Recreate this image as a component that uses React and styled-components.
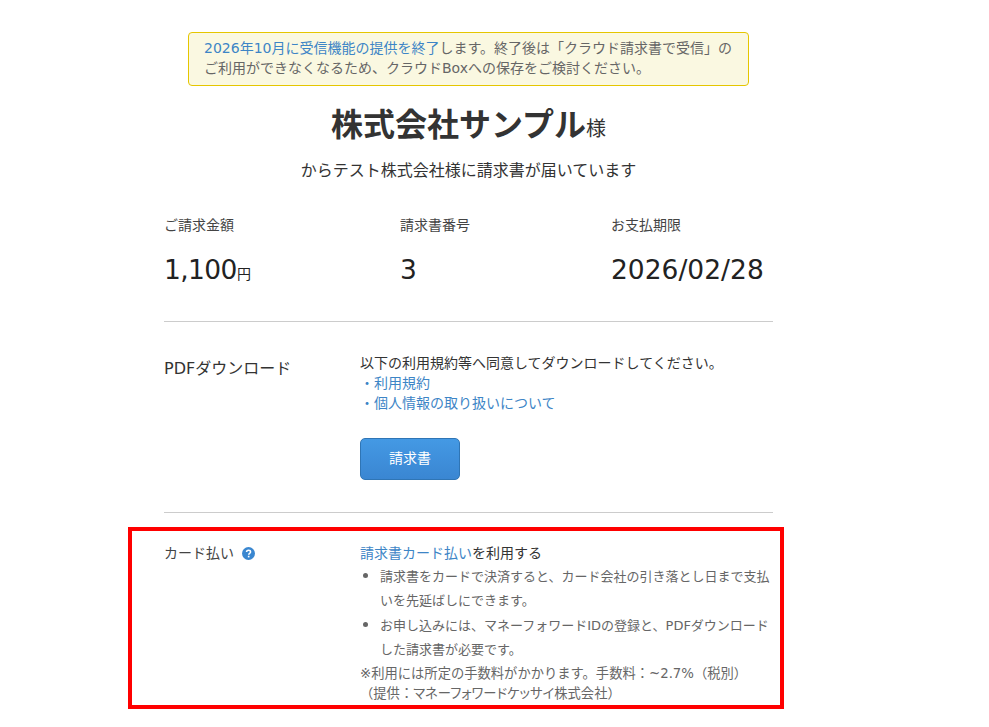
import React from 'react'
import styled, { createGlobalStyle } from 'styled-components'

const GlobalStyle = createGlobalStyle`
    html, body {
        margin: 0;
        background: #fff;
    }
    body {
        font-family: "DejaVu Sans", "Noto Sans CJK JP", sans-serif;
        color: #333;
        overflow: hidden;
    }
`;

const Page = styled.div`
    width: 609px;
    height: 727px;
    margin-left: 164px;
    padding-top: 32px;
    box-sizing: border-box;
`;

const Notice = styled.div`
    width: 561px;
    height: 54px;
    box-sizing: border-box;
    margin: 0 auto;
    padding: 5px 15px;
    background: #faf8e1;
    border: 1px solid #e5c600;
    border-radius: 4px;
    color: #666;
    font-size: 14px;
    line-height: 20px;
    white-space: nowrap;
`;

const TextLink = styled.a`
    color: #3d85c6;
    text-decoration: none;
`;

const Title = styled.h1`
    margin: 16px 0 0;
    height: 46px;
    line-height: 46px;
    text-align: center;
    font-size: 32px;
    font-weight: 700;
    color: #333;
    white-space: nowrap;
`;

const TitleSuffix = styled.span`
    font-size: 20px;
    font-weight: 400;
`;

const Subtitle = styled.p`
    margin: 11px 0 0;
    text-align: center;
    font-size: 16px;
    line-height: 24px;
`;

const Summary = styled.div`
    display: grid;
    grid-template-columns: 236px 211px 1fr;
    margin-top: 32px;
    padding-bottom: 27px;
    border-bottom: 1px solid #ccc;
`;

const SummaryLabel = styled.div`
    font-size: 14px;
    line-height: 20px;
    color: #444;
`;

const SummaryValue = styled.div`
    margin-top: 15px;
    font-size: 26.5px;
    line-height: 40px;
    color: #222;
`;

const Amount = styled.span`
    letter-spacing: -0.6px;
`;

const Yen = styled.span`
    font-size: 14px;
`;

const Row = styled.section`
    display: flex;
    padding: 31px 0 32px;
    border-bottom: 1px solid #ccc;
`;

const RowLabel = styled.div`
    width: 196px;
    flex: none;
    padding-top: 4px;
    font-size: 16px;
    line-height: 24px;
    color: #333;
`;

const Body = styled.div`
    flex: 1;
    font-size: 14px;
    line-height: 20px;
    color: #333;
    white-space: nowrap;
`;

const DownloadButton = styled.button`
    display: block;
    width: 100px;
    height: 42px;
    margin-top: 25px;
    padding: 0 0 4px;
    border: 1px solid #2f75b5;
    border-radius: 5px;
    background: linear-gradient(#4499e4, #3a86d2);
    color: #fff;
    font-family: inherit;
    font-size: 14px;
`;

const CardSection = styled.section`
    display: flex;
    box-sizing: border-box;
    height: 182px;
    margin: 14px -11px 0 -36px;
    padding: 12px 0 0 32px;
    border: 4px solid #f00;
`;

const CardLabel = styled.div`
    display: flex;
    align-items: center;
    align-self: flex-start;
    gap: 8px;
    width: 196px;
    flex: none;
    font-size: 14px;
    line-height: 20px;
    color: #444;
`;

const HelpIcon = styled.svg`
    width: 13px;
    height: 13px;
    margin-top: 1px;
`;

const CardBody = styled.div`
    flex: 1;
    font-size: 14px;
    line-height: 20px;
    color: #333;
`;

const BulletList = styled.ul`
    margin: 1px 0 0;
    padding: 0 0 0 20px;
    width: 392px;
    font-size: 13px;
    line-height: 24px;
    color: #666;

    li::marker {
        font-size: 16px;
    }
`;

const Note = styled.p`
    margin: 2px 0 0;
    font-size: 13.3px;
    line-height: 20px;
    color: #666;
    white-space: nowrap;
`;

const KanaRun = styled.span`
    font-feature-settings: "palt";
`;

const App = () => {
    return (
        <>
            <GlobalStyle />
            <Page>
                <Notice>
                    <TextLink href="#">2026年10月に受信機能の提供を終了</TextLink>します。終了後は「クラウド請求書で受信」の<br />
                    ご利用ができなくなるため、クラウドBoxへの保存をご検討ください。
                </Notice>
                <Title>株式会社サンプル<TitleSuffix>様</TitleSuffix></Title>
                <Subtitle>からテスト株式会社様に請求書が届いています</Subtitle>
                <Summary>
                    <div>
                        <SummaryLabel>ご請求金額</SummaryLabel>
                        <SummaryValue><Amount>1,100</Amount><Yen>円</Yen></SummaryValue>
                    </div>
                    <div>
                        <SummaryLabel>請求書番号</SummaryLabel>
                        <SummaryValue>3</SummaryValue>
                    </div>
                    <div>
                        <SummaryLabel>お支払期限</SummaryLabel>
                        <SummaryValue>2026/02/28</SummaryValue>
                    </div>
                </Summary>
                <Row>
                    <RowLabel>PDFダウンロード</RowLabel>
                    <Body>
                        以下の利用規約等へ同意してダウンロードしてください。<br />
                        <TextLink href="#">・利用規約</TextLink><br />
                        <TextLink href="#">・個人情報の取り扱いについて</TextLink>
                        <DownloadButton>請求書</DownloadButton>
                    </Body>
                </Row>
                <CardSection>
                    <CardLabel>
                        カード払い
                        <HelpIcon viewBox="0 0 12 12">
                            <circle cx="6" cy="6" r="6" fill="#3a87d0" />
                            <path d="M4.2 4.7c0-1.1.8-1.8 1.9-1.8s1.8.7 1.8 1.6c0 1.4-1.7 1.4-1.7 2.6" fill="none" stroke="#fff" strokeWidth="1.4" />
                            <rect x="5.4" y="8.1" width="1.5" height="1.5" fill="#fff" />
                        </HelpIcon>
                    </CardLabel>
                    <CardBody>
                        <TextLink href="#">請求書カード払い</TextLink>を利用する
                        <BulletList>
                            <li>請求書をカードで決済すると、カード会社の引き落とし日まで支払いを先延ばしにできます。</li>
                            <li>お申し込みには、マネーフォワードIDの登録と、PDFダウンロードした請求書が必要です。</li>
                        </BulletList>
                        <Note>
                            ※利用には所定の手数料がかかります。手数料：~2.7%（税別）<br />
                            （提供：<KanaRun>マネーフォワードケッサイ</KanaRun>株式会社）
                        </Note>
                    </CardBody>
                </CardSection>
            </Page>
        </>
    )
}

export default App
